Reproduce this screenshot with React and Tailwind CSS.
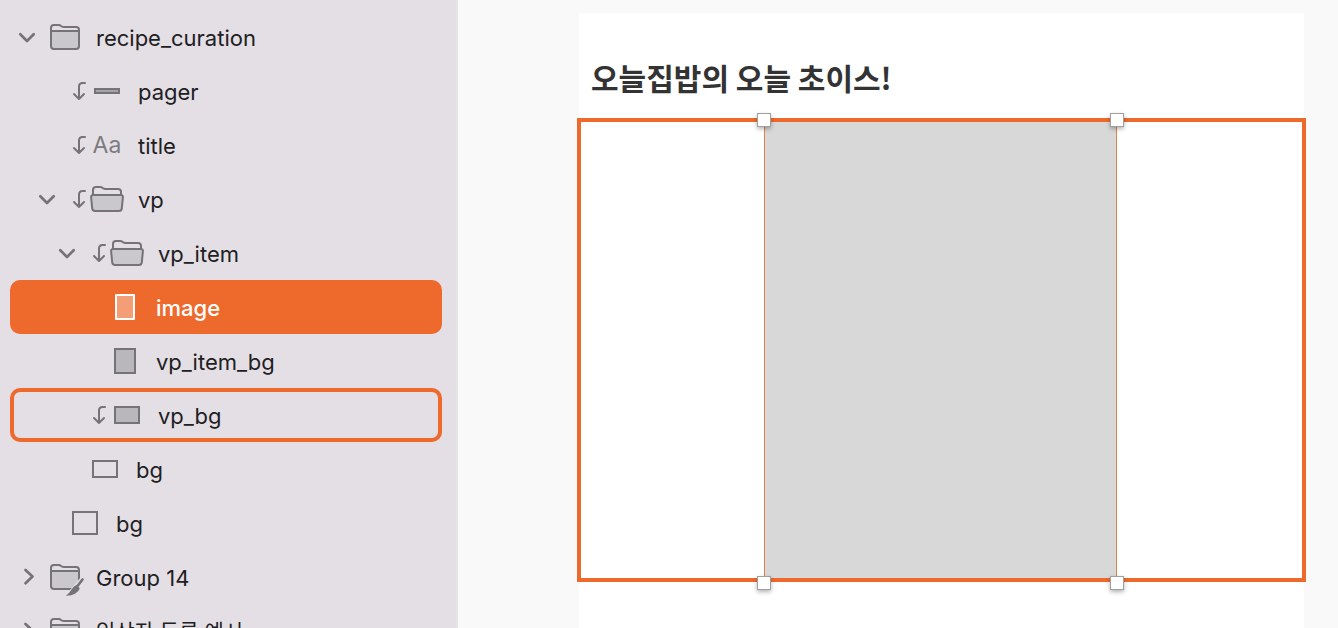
import React, { useState } from "react";

const GRAY = "#757377";

const rows = [
  { depth: 0, toggle: "open", icon: "folder", label: "recipe_curation" },
  { depth: 1, mask: true, icon: "bar", label: "pager" },
  { depth: 1, mask: true, icon: "text", label: "title" },
  { depth: 1, toggle: "open", mask: true, icon: "folderOpen", label: "vp" },
  { depth: 2, toggle: "open", mask: true, icon: "folderOpen", label: "vp_item" },
  { depth: 3, icon: "imageRect", label: "image" },
  { depth: 3, icon: "portraitRect", label: "vp_item_bg" },
  { depth: 2, mask: true, icon: "landscapeRect", label: "vp_bg", hovered: true },
  { depth: 2, icon: "outlineWide", label: "bg" },
  { depth: 1, icon: "outlineSquare", label: "bg" },
  { depth: 0, toggle: "closed", icon: "folderEdit", label: "Group 14" },
  { depth: 0, toggle: "closed", icon: "folder", label: "입상자 등록 예시", korean: true },
];

const indents = ["pl-[7px]", "pl-[27px]", "pl-[47px]", "pl-[67px]"];

function Chevron({ open }) {
  return (
    <svg className="h-5 w-5" viewBox="0 0 20 20" fill="none" stroke={GRAY} strokeWidth="2.7" strokeLinecap="round" strokeLinejoin="round" aria-hidden="true">
      {open ? <path d="M3.3 7.2 10 14l6.7-6.8" /> : <path d="M8.5 3 15.5 9.5 8.5 16.2" />}
    </svg>
  );
}

function MaskArrow() {
  return (
    <svg className="h-[34px] w-[22px] shrink-0" viewBox="0 0 22 34" fill="none" stroke={GRAY} strokeWidth="2" strokeLinecap="round" strokeLinejoin="round" aria-hidden="true">
      <path d="M17 9h-2.5q-3.500 0-3.500 3.500V25M6 20l5 5 5-5" />
    </svg>
  );
}

function ClosedFolder() {
  return (
    <>
      <path d="M3 11h28v15q0 3-3 3H6q-3 0-3-3z" fill="#cac8cc" stroke="none" />
      <path d="M3 26V8q0-3 3-3h4.5q1.500 0 2.500 1l.8.5q.8.5 2.200.5H28q3 0 3 3v16q0 3-3 3H6q-3 0-3-3zM3 11h28" />
    </>
  );
}

function LayerIcon({ type }) {
  if (type === "text") {
    return (
      <span className="w-[34px] shrink-0 text-center text-[23px] leading-8 text-[#7d7b7f]" aria-hidden="true">
        Aa
      </span>
    );
  }
  return (
    <svg className="h-[34px] w-[34px] shrink-0 overflow-visible" viewBox="0 0 34 34" fill="none" stroke={GRAY} strokeWidth="2" strokeLinejoin="round" aria-hidden="true">
      {type === "folder" && <ClosedFolder />}
      {type === "folderEdit" && (
        <>
          <ClosedFolder />
          <path d="M33 17 25 26.500 21 31 16 36h13l6-8z" fill="#e4dfe5" stroke="none" />
          <path d="M34.500 19.500 29.500 26" strokeWidth="2.7" strokeLinecap="round" />
          <path d="M28.300 25 31.800 28.200Q31 31.500 27 33.800 23 36 18 35.700 21.500 33 23.500 29.500 25.500 26.200 28.300 25z" fill={GRAY} stroke="none" />
        </>
      )}
      {type === "folderOpen" && (
        <>
          <path d="M3 13h28q2.100 0 1.900 2.200l-1.100 11.200q-.3 2.600-2.800 2.600H5q-2.500 0-2.800-2.600L1.100 15.200Q.9 13 3 13z" fill="#cac8cc" />
          <path d="M3 13V8q0-3 3-3h4q1.500 0 2.500.8l.8.6q.9.6 2.200.6H28q3 0 3 3v3" />
        </>
      )}
      {type === "bar" && <path d="M5 15h24v4H5z" fill="#a5a3a7" strokeLinejoin="miter" />}
      {type === "imageRect" && <path d="M8 5h18v24H8z" fill="#f49e78" stroke="#fff" />}
      {type === "portraitRect" && <path d="M7 5h20v24H7z" fill="#b9b7bc" strokeLinejoin="miter" />}
      {type === "landscapeRect" && <path d="M5 9h24v16H5z" fill="#b9b7bc" strokeLinejoin="miter" />}
      {type === "outlineWide" && <path d="M5 9h24v16H5z" strokeLinejoin="miter" />}
      {type === "outlineSquare" && <path d="M5 6h24v22H5z" strokeLinejoin="miter" />}
    </svg>
  );
}

function LayerRow({ row, selected, onSelect }) {
  const tone = selected
    ? "bg-[#ed692c] text-white font-medium"
    : row.hovered
      ? "ring-4 ring-inset ring-[#ed692c] text-[#202022]"
      : "text-[#202022]";
  return (
    <li className={`flex h-[54px] shrink-0 items-center rounded-[10px] ${indents[row.depth]} ${tone}`}>
      <span className="mr-[11px] flex h-5 w-5 shrink-0">
        {row.toggle && (
          <button type="button" aria-label={`Toggle ${row.label}`} aria-expanded={row.toggle === "open"}>
            <Chevron open={row.toggle === "open"} />
          </button>
        )}
      </span>
      {row.mask && <MaskArrow />}
      <LayerIcon type={row.icon} />
      <button
        type="button"
        onClick={onSelect}
        className={`ml-[14px] flex-1 pt-[2px] text-left leading-8 whitespace-nowrap ${row.korean ? "text-[21px]" : "text-[22px]"}`}
      >
        {row.label}
      </button>
    </li>
  );
}

function Handle({ place }) {
  return <span className={`absolute h-[14px] w-[14px] border border-[#a0a0a0] bg-white shadow-[0_2px_4px_rgba(0,0,0,0.3)] ${place}`} />;
}

export default function App() {
  const [selected, setSelected] = useState(5);
  return (
    <div className="flex h-screen overflow-hidden bg-[#f9f9f9] font-['Inter','Noto_Sans_CJK_KR',sans-serif]">
      <aside className="w-[458px] shrink-0 overflow-hidden border-r-2 border-[#e4e3e5] bg-[#e4dfe5] pt-[10px] pr-[14px] pl-[10px]">
        <ul className="flex flex-col">
          {rows.map((row, i) => (
            <LayerRow key={i} row={row} selected={selected === i} onSelect={() => setSelected(i)} />
          ))}
        </ul>
      </aside>
      <main className="flex min-w-0 flex-1 pt-[13px] pr-[34px] pl-[121px]">
        <section className="min-w-0 flex-1 bg-white">
          <h1 className="flex h-[105px] items-center pt-[22px] pl-3 font-['Noto_Sans_CJK_KR',sans-serif] text-[30px] leading-10 font-bold whitespace-nowrap text-[#333]">
            오늘집밥의 오늘 초이스!
          </h1>
          <div className="-mx-[2px] flex h-[464px] justify-center border-4 border-[#ed692c] pr-[2px]">
            <div className="relative w-[49%] border-x border-solid border-x-[#e5804a] bg-[#d8d8d8]">
              <Handle place="-top-[9px] -left-2" />
              <Handle place="-top-[9px] -right-2" />
              <Handle place="-bottom-3 -left-2" />
              <Handle place="-bottom-3 -right-2" />
            </div>
          </div>
        </section>
      </main>
    </div>
  );
}
